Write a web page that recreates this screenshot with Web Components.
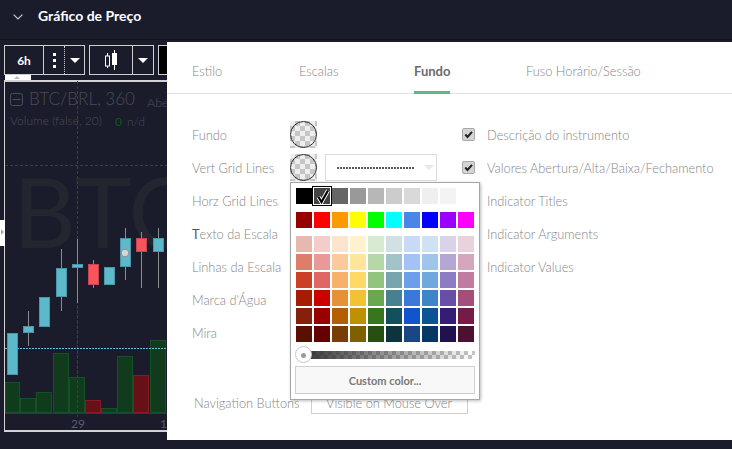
<!DOCTYPE html>
<html lang="pt"><head><meta charset="utf-8"><title>Gráfico de Preço</title>
<style>
html,body{margin:0;height:449px;overflow:hidden;background:#1a1c2c;font-family:Lato,"Liberation Sans",sans-serif}
</style></head><body>
<price-panel></price-panel>
<script>
const def=(name,html,setup)=>customElements.define(name,class extends HTMLElement{
  constructor(){super();this.attachShadow({mode:'open'}).innerHTML=html;}
  connectedCallback(){setup&&setup(this.shadowRoot,this);}
});
const checker='background-color:#eee;background-image:conic-gradient(#c6c6c6 25%,transparent 0 50%,#c6c6c6 0 75%,transparent 0);background-size:10px 10px;';

def('panel-header',`<style>
:host{display:flex;align-items:center;height:31px;padding-bottom:8px;border-bottom:1px solid #12131f;box-sizing:content-box;color:#fff}
svg{margin-left:13px;width:10px;height:6px;margin-top:2px}
b{margin-left:15px;font:700 14px Lato,sans-serif}
</style><svg viewBox="0 0 10 6"><path d="M.6.6 5 5 9.4.6" fill="none" stroke="#c3c8d8" stroke-width="1.2"/></svg><b>Gráfico de Preço</b>`);

def('chart-toolbar',`<style>
:host{display:flex;gap:4px;height:30px;margin:5px 0 0 4px}
.g{display:flex;border:1px solid #cfcfd2;box-sizing:border-box;height:30px;color:#fff}
.c{display:flex;align-items:center;justify-content:center;box-sizing:border-box;height:28px}
.c+.c{border-left:1px solid #cfcfd2}
.c+.d{border-left:1px dotted #cfcfd2}
.t{font:700 12px Lato,sans-serif}
i{border:5px solid transparent;border-top:5px solid #fff;border-bottom:0;display:block}
.k{background:#000;width:80px}
</style>
<div class="g" style="width:81px"><div class="c t" style="width:38px">6h</div><div class="c" style="width:21px"><svg width="3" height="15"><rect width="3" height="3" fill="#fff" y="0"/><rect width="3" height="3" fill="#fff" y="6"/><rect width="3" height="3" fill="#fff" y="12"/></svg></div><div class="c d" style="width:20px"><i></i></div></div>
<div class="g" style="width:65px"><div class="c" style="width:42px"><svg width="14" height="20" viewBox="0 0 14 20"><path d="M3.5 3V18M10.5 0V20" stroke="#fff"/><rect x="1.5" y="6" width="4" height="10" fill="#1a1c2c" stroke="#fff"/><rect x="8" y="3" width="5" height="12" fill="#fff"/></svg></div><div class="c" style="width:21px"><i></i></div></div>
<div class="g k"></div>`);

def('chart-canvas',`<style>
:host{display:block;position:relative;margin:0 0 0 4px;height:352px;border:solid #d2d2d4;border-width:2px 0 2px 1px;box-sizing:border-box;width:170px;overflow:visible}
svg{display:block;position:absolute;left:0;top:-2px}
text{font-family:Lato,sans-serif}
.tab{position:absolute;left:0;top:-7px;width:26px;height:5px;background:#fff}
.tab:after{content:"";position:absolute;left:9px;top:1px;border:3px solid transparent;border-bottom:3px solid #bbb;border-top:0}
.side{position:absolute;left:-5px;top:138px;width:5px;height:26px;background:#fff}
.side:after{content:"";position:absolute;left:1px;top:9px;border:3px solid transparent;border-left:3px solid #aaa;border-right:0}
</style><div class="tab"></div><div class="side"></div><svg id="s" width="170" height="352" viewBox="5 80 170 352"></svg>`,
(r)=>{
 const vols=[[5,20,382,1],[20,36,398,1],[36,52,392,1],[53,69,353,1],[69,85,377,1],[85,101,400,0],[101,117,408,1],[117,133,356,1],[133,149,375,0],[150,166,340,1]];
 const c=[[7,333,375,1,0,0],[23,326,333,1,311,346],[39,297,327,1,0,0],[56,268,297,1,249,311],[72,264,268,1,239,303],[88,264,285,0,260,288],[104,267,285,1,0,0],[120,238,267,1,228,280],[136,238,252,0,232,288],[153,238,252,1,228,288]];
 let h=`<text x="13" y="248" font-size="97" fill="#24262f">BTC</text>`;
 h+=`<path d="M77.5 81V417M5 165.5H167" stroke="#3b3d49" stroke-dasharray="3 2"/>`;
 for(const [a,b,t,g] of vols)h+=`<rect x="${a+.5}" y="${t+.5}" width="${b-a-1}" height="${412-t}" fill="${g?'#103b1c':'#681019'}" stroke="${g?'#145226':'#8c1822'}"/>`;
 h+=`<path d="M77.5 300V417" stroke="#3b3d49" stroke-dasharray="3 2"/>`;
 h+=`<path d="M5 348.5H167" stroke="#5fc4d6" stroke-dasharray="2 1"/>`;
 for(const [x,t,b,up,w1,w2] of c){ if(w2)h+=`<path d="M${x+5}.5 ${w1}V${w2}" stroke="#8a8c92"/>`;
  h+=`<rect x="${x+.5}" y="${t+.5}" width="10" height="${b-t-1}" fill="${up?'#5cb9c9':'#fa5458'}" stroke="${up?'#4a96a8':'#c44650'}"/>`;}
 h+=`<circle cx="125" cy="253" r="3.8" fill="#d6d6d8" stroke="#8d9096"/>`;
 h+=`<path d="M5 413.5H167" stroke="#34353f"/>`;
 h+=`<text x="71" y="428" font-size="12" fill="#5a5c66">29</text><text x="160" y="428" font-size="12" fill="#5a5c66">1</text>`;
 h+=`<rect x="10.5" y="93.5" width="12" height="12" rx="2" fill="none" stroke="#4b4d57"/><path d="M12.5 99.5H20.5" stroke="#4b4d57"/>`;
 h+=`<text x="29" y="105" font-size="17" font-weight="300" fill="#4a4c55">BTC/BRL, 360</text><text x="147" y="107" font-size="12.5" font-weight="300" fill="#4a4c55">Abe</text>`;
 h+=`<text x="10" y="125" font-size="12" font-weight="300" fill="#4a4c55">Volume (false, 20)</text><text x="115" y="126" font-size="12" fill="#0a5a12">0</text><text x="127" y="126" font-size="12" font-weight="300" fill="#4a4c55">n/d</text>`;
 r.getElementById('s').innerHTML=h;
});

def('color-dot',`<style>
:host{display:block;width:27px;height:27px;${checker}position:relative}
:host:after{content:"";position:absolute;inset:0;border:1.3px solid #2b2b2b;border-radius:50%;box-sizing:border-box}
</style>`);

def('check-box',`<style>
:host{display:block;width:11px;height:11px;background:#d4d4d4;border:1px solid #a8a8a8;border-radius:2px;box-sizing:content-box}
svg{display:block}
</style><svg width="11" height="11" viewBox="0 0 11 11"><path d="M2.3 5.5 4.5 8 9 2.8" fill="none" stroke="#222" stroke-width="2"/></svg>`);

def('dialog-tabs',`<style>
:host{display:grid;grid-template-columns:107px 115px 112px auto;height:51px;padding-left:25px;border-bottom:1px solid #e2e2e2;font:300 12.8px Lato,sans-serif;color:#858585}
span{display:block;justify-self:start;height:49px;line-height:59px;box-sizing:content-box}
.on{font:700 13px/59px Lato,sans-serif;color:#6b6b6b;border-bottom:3px solid #5fb88a}
</style><span>Estilo</span><span>Escalas</span><span class="on">Fundo</span><span>Fuso Horário/Sessão</span>`);

def('color-picker',`<style>
:host{display:block;position:absolute;left:123px;top:140px;width:190px;height:218px;box-sizing:border-box;background:#fff;border:1px solid #a6a6a6;box-shadow:1px 1px 3px #0004;padding:5px 4px 0 4px;z-index:3}
.g{display:grid;grid-template-columns:repeat(10,16px);gap:2px;margin-left:1px}
.g+.g{margin-top:8px}
.g span{display:block;height:16px;width:16px;position:relative}
.sel:before{content:"";position:absolute;inset:-2px;border:1px solid #000;outline:1px solid #fff;outline-offset:-2px}
.sel svg{position:absolute;left:1px;top:0}
.sl{position:relative;height:8px;margin:9px 0 7px 5px;width:175px;background:linear-gradient(90deg,#333,#3330),conic-gradient(#c6c6c6 25%,#fff 0 50%,#c6c6c6 0 75%,#fff 0) 0 0/8px 8px}
.sl:before{content:"";position:absolute;left:-5px;top:-5px;width:17px;height:17px;border-radius:50%;background:#fff;border:1px solid #c4c4d0;box-sizing:border-box}
.sl:after{content:"";position:absolute;left:1px;top:1.5px;width:5px;height:5px;border-radius:50%;background:#9a9aa8}
button{display:block;width:180px;height:28px;margin:0;padding:0;background:#f8f8f8;border:1px solid #cfcfcf;font:700 11px Lato,sans-serif;color:#787878}
</style><div id="p"></div><div class="sl"></div><button>Custom color...</button>`,
(r)=>{
 const rows=[['000','434343','666','999','b7b7b7','ccc','d9d9d9','efefef','f3f3f3','fff'],['980000','f00','f90','ff0','0f0','0ff','4a86e8','00f','90f','f0f']];
 const more=['e6b8af f4cccc fce5cd fff2cc d9ead3 d0e0e3 c9daf8 cfe2f3 d9d2e9 ead1dc','dd7e6b ea9999 f9cb9c ffe599 b6d7a8 a2c4c9 a4c2f4 9fc5e8 b4a7d6 d5a6bd','cc4125 e06666 f6b26b ffd966 93c47d 76a5af 6d9eeb 6fa8dc 8e7cc3 c27ba0','a61c00 cc0000 e69138 f1c232 6aa84f 45818e 3c78d8 3d85c6 674ea7 a64d79','85200c 990000 b45f06 bf9000 38761d 134f5c 1155cc 0b5394 351c75 741b47','5b0f00 660000 783f04 7f6000 274e13 0c343d 1c4587 073763 20124d 4c1130'].map(s=>s.split(' ')).flat();
 const sw=(c,isSel)=>`<span class="${isSel===true?'sel':''}" style="background:#${c}">${isSel===true?'<svg width="16" height="17" viewBox="0 0 16 17"><path d="M3.5 9 6.5 14 13 2.5" fill="none" stroke="#fff" stroke-width="4"/><path d="M3.5 9 6.5 14 13 2.5" fill="none" stroke="#000" stroke-width="2.2"/></svg>':''}</span>`;
 r.getElementById('p').innerHTML=`<div class="g">${rows[0].map((c,i)=>sw(c,i==1)).join('')}</div><div class="g">${rows[1].map(c=>sw(c)).join('')}</div><div class="g">${more.map(c=>sw(c)).join('')}</div>`;
});

def('chart-dialog',`<style>
:host{display:block;position:absolute;left:167px;top:42px;width:565px;height:398px;background:#fff;font:300 12.8px Lato,sans-serif;color:#858585}
.f{display:grid;grid-template-columns:98px 35px 112px 25px 25px 1fr;grid-auto-rows:33px;align-items:center;padding:24px 0 0 25px}
.c1{grid-column:1;white-space:nowrap}.c2{grid-column:2}.c3{grid-column:3}.c5{grid-column:5}.c6{grid-column:6;white-space:nowrap}
.sel{height:27px;box-sizing:border-box;border:1px solid #dcdcdc;display:flex;align-items:center;padding-left:11px;gap:9px}
.sel u{display:block;width:78px;height:2px;background:repeating-linear-gradient(90deg,#555 0 2px,#fff 0 3px)}
.sel i{border:5px solid transparent;border-top:5px solid #e8e8e8;border-bottom:0}
.nav{display:flex;align-items:center;gap:11px;margin:43px 0 0 27px;height:22px}
.box{width:157px;height:22px;box-sizing:border-box;border:1px solid #cfcfcf;text-align:center;line-height:21px}
.t{color:#555;font-weight:400}
</style>
<dialog-tabs></dialog-tabs>
<div class="f">
<span class="c1">Fundo</span><color-dot class="c2"></color-dot><check-box class="c5"></check-box><span class="c6">Descrição do instrumento</span>
<span class="c1">Vert Grid Lines</span><color-dot class="c2"></color-dot><div class="sel c3"><u></u><i></i></div><check-box class="c5"></check-box><span class="c6">Valores Abertura/Alta/Baixa/Fechamento</span>
<span class="c1">Horz Grid Lines</span><span class="c6">Indicator Titles</span>
<span class="c1"><span class="t">T</span>exto da Escala</span><span class="c6">Indicator Arguments</span>
<span class="c1">Linhas da Escala</span><span class="c6">Indicator Values</span>
<span class="c1">Marca d'Água</span>
<span class="c1">Mira</span>
</div>
<div class="nav"><span>Navigation Buttons</span><div class="box">Visible on Mouse Over</div></div>
<color-picker></color-picker>`);

def('price-panel',`<style>:host{display:block;position:relative;height:449px;overflow:hidden}</style>
<panel-header></panel-header><chart-toolbar></chart-toolbar><div style="height:5px"></div><chart-canvas></chart-canvas><chart-dialog></chart-dialog>`);
</script></body></html>
